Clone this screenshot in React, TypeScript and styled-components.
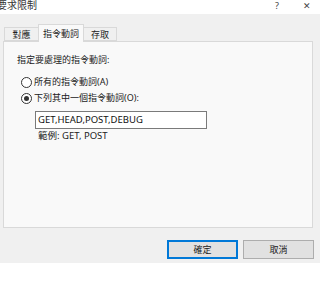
import * as React from 'react';
import styled, { createGlobalStyle } from 'styled-components';

const GlobalStyle = createGlobalStyle`
  html, body {
    margin: 0;
    padding: 0;
    background: #ffffff;
  }
  body {
    font-family: 'Noto Sans', 'Noto Sans CJK TC', sans-serif;
    font-size: 9px;
    color: #222;
  }
`;

const Dialog = styled.div`
  width: 320px;
  height: 263px;
  background: #f0f0f0;
  display: flex;
  flex-direction: column;
  overflow: hidden;
`;

const TitleBar = styled.div`
  height: 14px;
  background: #ffffff;
  display: flex;
  align-items: flex-start;
`;

const Title = styled.span`
  margin-left: -3px;
  font-size: 10px;
  line-height: 11px;
  color: #333;
`;

const TitleButtons = styled.div`
  margin-left: auto;
  display: flex;
  gap: 24px;
  padding-right: 9px;
  font-size: 9px;
  line-height: 11px;
  color: #444;
`;

const TabStrip = styled.div`
  display: flex;
  align-items: flex-end;
  height: 27px;
  padding-left: 4px;
  position: relative;
  z-index: 1;
`;

const Tab = styled.div<{ $active?: boolean; $width: number }>`
  box-sizing: border-box;
  width: ${(p) => p.$width}px;
  height: ${(p) => (p.$active ? 18 : 14)}px;
  margin-bottom: ${(p) => (p.$active ? -1 : 0)}px;
  background: ${(p) => (p.$active ? '#f9f9f9' : '#f0f0f0')};
  border: 1px solid #d9d9d9;
  border-bottom: ${(p) => (p.$active ? 'none' : '1px solid #d9d9d9')};
  display: flex;
  justify-content: center;
  padding-top: ${(p) => (p.$active ? 3 : 1)}px;
  font-size: 9px;
  line-height: 11px;
  color: #222;
  white-space: nowrap;
  & + & {
    margin-left: -1px;
  }
`;

const TabPanel = styled.div`
  box-sizing: border-box;
  margin-left: 3px;
  width: 310px;
  height: 187px;
  background: #f9f9f9;
  border: 1px solid #d9d9d9;
  padding: 12px 0 0 13px;
  display: flex;
  flex-direction: column;
`;

const Caption = styled.div`
  line-height: 12px;
`;

const RadioGroup = styled.div`
  display: flex;
  flex-direction: column;
  margin-top: 8px;
  padding-left: 4px;
`;

const RadioRow = styled.label`
  display: flex;
  align-items: center;
  height: 16px;
  gap: 2px;
  line-height: 12px;
`;

const RadioDot = styled.span<{ $checked?: boolean }>`
  box-sizing: border-box;
  width: 11px;
  height: 11px;
  border-radius: 50%;
  border: 1px solid #333;
  background: #fff;
  display: flex;
  align-items: center;
  justify-content: center;
  &::after {
    content: '';
    width: 5px;
    height: 5px;
    border-radius: 50%;
    background: ${(p) => (p.$checked ? '#333' : 'transparent')};
  }
`;

const Indented = styled.div`
  padding-left: 18px;
  margin-top: 5px;
  display: flex;
  flex-direction: column;
`;

const VerbInput = styled.div`
  box-sizing: border-box;
  width: 172px;
  height: 18px;
  border: 1px solid #7a7a7a;
  background: #ffffff;
  padding: 0 2px;
  line-height: 16px;
  font-size: 9.5px;
  color: #111;
  white-space: nowrap;
`;

const Example = styled.div`
  margin-top: 1px;
  padding-left: 3px;
  line-height: 12px;
  font-size: 9.5px;
`;

const ButtonRow = styled.div`
  margin-top: auto;
  display: flex;
  justify-content: flex-end;
  gap: 5px;
  padding: 0 6px 4px 0;
`;

const DialogButton = styled.div<{ $primary?: boolean }>`
  box-sizing: border-box;
  width: 71px;
  height: 19px;
  background: #e1e1e1;
  border: ${(p) => (p.$primary ? '2px solid #0078d7' : '1px solid #adadad')};
  display: flex;
  align-items: center;
  justify-content: center;
  color: #222;
`;

export default function App() {
  return (
    <>
      <GlobalStyle />
      <Dialog>
        <TitleBar>
          <Title>要求限制</Title>
          <TitleButtons>
            <span>?</span>
            <span>✕</span>
          </TitleButtons>
        </TitleBar>
        <TabStrip>
          <Tab $width={35}>對應</Tab>
          <Tab $active $width={46}>指令動詞</Tab>
          <Tab $width={34}>存取</Tab>
        </TabStrip>
        <TabPanel>
          <Caption>指定要處理的指令動詞:</Caption>
          <RadioGroup>
            <RadioRow>
              <RadioDot />
              所有的指令動詞(A)
            </RadioRow>
            <RadioRow>
              <RadioDot $checked />
              下列其中一個指令動詞(O):
            </RadioRow>
          </RadioGroup>
          <Indented>
            <VerbInput>GET,HEAD,POST,DEBUG</VerbInput>
            <Example>範例: GET, POST</Example>
          </Indented>
        </TabPanel>
        <ButtonRow>
          <DialogButton $primary>確定</DialogButton>
          <DialogButton>取消</DialogButton>
        </ButtonRow>
      </Dialog>
    </>
  );
}
